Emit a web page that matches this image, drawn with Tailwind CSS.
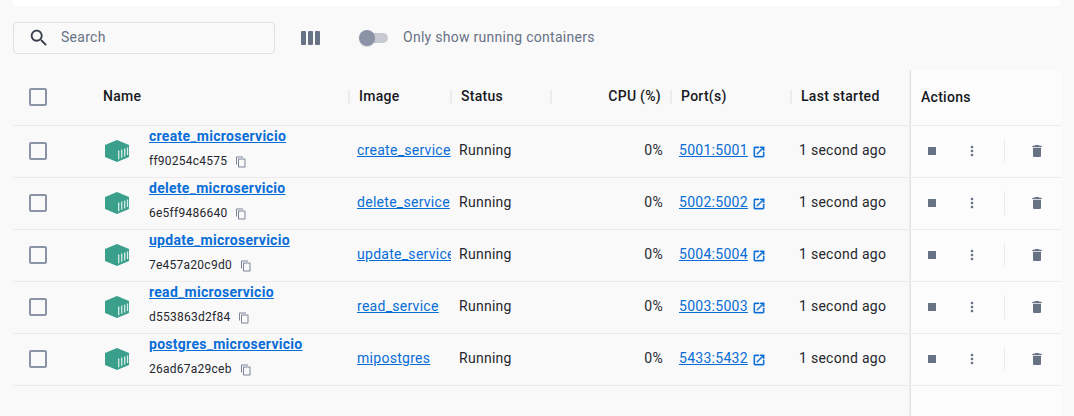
<!DOCTYPE html>
<html lang="en">
<head>
<meta charset="utf-8">
<title>Containers</title>
<script src="https://cdn.jsdelivr.net/npm/@tailwindcss/browser@4"></script>
</head>
<body class="h-[416px] w-[1074px] overflow-hidden bg-[#f9f9f9] font-['Roboto',sans-serif] text-sm leading-5 tracking-[0.28px] text-[#17191e]">
<svg class="hidden">
  <symbol id="cube" viewBox="0 0 24 24"><path fill="#3a9f8b" d="M12 1l12 5v12l-12 5L0 18V6z"/><path stroke="#d8ece8" stroke-width="1.3" d="M13.7 11.6v8.6M16.7 10.5v8.2M19.7 9.4v8M22.5 8.4v7.7"/></symbol>
  <symbol id="copy" viewBox="0 0 24 24"><path d="M16 1H4c-1.1 0-2 .9-2 2v14h2V3h12V1zm3 4H8c-1.1 0-2 .9-2 2v14c0 1.100.9 2 2 2h11c1.100 0 2-.9 2-2V7c0-1.100-.9-2-2-2zm0 16H8V7h11v14z"/></symbol>
  <symbol id="open" viewBox="0 0 24 24"><path stroke-width=".6" d="M19 19H5V5h7V3H5c-1.110 0-2 .9-2 2v14c0 1.100.89 2 2 2h14c1.100 0 2-.9 2-2v-7h-2v7zM14 3v2h3.590l-9.830 9.830 1.410 1.410L19 6.410V10h2V3h-7z"/></symbol>
  <symbol id="more" viewBox="0 0 24 24"><path d="M12 8c1.100 0 2-.9 2-2s-.9-2-2-2-2 .9-2 2 .9 2 2 2zm0 2c-1.100 0-2 .9-2 2s.9 2 2 2 2-.9 2-2-.9-2-2-2zm0 6c-1.100 0-2 .9-2 2s.9 2 2 2 2-.9 2-2-.9-2-2-2z"/></symbol>
  <symbol id="trash" viewBox="0 0 24 24"><path d="M6 19c0 1.100.9 2 2 2h8c1.100 0 2-.9 2-2V7H6v12zM19 4h-3.500l-1-1h-5l-1 1H5v2h14V4z"/></symbol>
</svg>
<div class="ml-[13px] flex h-full w-[1048px] flex-col">
  <div class="h-1.5 shrink-0 rounded-b bg-white"></div>
  <div class="mt-4 flex h-8 shrink-0 items-center text-[#677285]">
    <div class="flex h-8 w-[262px] items-center rounded border border-[#dfe0e3] pl-[14px]">
      <svg class="size-[22px] fill-[#393f4a]" viewBox="0 0 24 24"><path d="M15.500 14h-.79l-.28-.27C15.410 12.590 16 11.110 16 9.500 16 5.910 13.090 3 9.500 3S3 5.910 3 9.500 5.910 16 9.500 16c1.610 0 3.090-.59 4.230-1.570l.27.28v.79l5 4.990L20.490 19l-4.990-5zm-6 0C7.010 14 5 11.990 5 9.500S7.010 5 9.500 5 14 7.010 14 9.500 11.990 14 9.500 14z"/></svg>
      <span class="mb-0.5 ml-[11px]">Search</span>
    </div>
    <div class="ml-[26px] flex gap-[2px]">
      <i class="h-[14px] w-[5px] rounded-[1px] bg-[#677285]"></i><i class="h-[14px] w-[5px] rounded-[1px] bg-[#677285]"></i><i class="h-[14px] w-[5px] rounded-[1px] bg-[#677285]"></i>
    </div>
    <div class="ml-[39px] flex h-4 w-[29px] items-center">
      <i class="z-10 size-4 rounded-full bg-[#8b93a6] shadow-[0_1px_1px_#0002]"></i>
      <i class="-ml-3 h-[10px] w-[25px] rounded-full bg-[#c6c9d2]"></i>
    </div>
    <span class="mb-0.5 ml-[15px]">Only show running containers</span>
  </div>
  <div id="table" class="mt-4 flex min-h-0 grow flex-col"></div>
</div>
<script>
const rows = [
  ['create_microservicio', 'ff90254c4575', 'create_service', '5001:5001'],
  ['delete_microservicio', '6e5ff9486640', 'delete_service', '5002:5002'],
  ['update_microservicio', '7e457a20c9d0', 'update_service', '5004:5004'],
  ['read_microservicio', 'd553863d2f84', 'read_service', '5003:5003'],
  ['postgres_microservicio', '26ad67a29ceb', 'mipostgres', '5433:5432'],
];
const grid = 'grid shrink-0 grid-cols-[80px_256px_102px_100px_120px_120px_120px_150px] grid-rows-[100%] border-b border-[#ebebed]';
const box = '<i class="mb-px ml-4 block size-[18px] rounded-[2px] border-2 border-[#8b93a6]"></i>';
const sep = 'before:-ml-px before:mr-[9px] before:mt-px before:h-[14px] before:w-[2px] before:bg-[#ececee]';
const header = `<div class="${grid} h-14 items-center font-medium">
  <div>${box}</div>
  <div class="pb-[3px] pl-[10px]">Name</div>
  <div class="flex items-center pb-[3px] ${sep}">Image</div>
  <div class="flex items-center pb-[3px] ${sep}">Status</div>
  <div class="flex items-center pb-[3px] ${sep}"><span class="ml-auto pr-[10px]">CPU (%)</span></div>
  <div class="flex items-center pb-[3px] ${sep}">Port(s)</div>
  <div class="flex items-center pb-[3px] ${sep}">Last started</div>
  <div class="flex h-full items-center rounded-tr bg-[#fcfcfc] pb-px pl-[10px] shadow-[-1px_0_2px_#0002] [clip-path:inset(0_0_0_-4px)]">Actions</div>
</div>`;
const body = rows.map(([name, id, image, port]) => `<div class="${grid} h-[52px] items-center text-[#25272d]">
  <div>${box}</div>
  <div class="flex items-center pb-px pl-3">
    <svg class="mr-5 size-6"><use href="#cube"/></svg>
    <div class="-mt-[5px] flex flex-col">
      <a class="font-bold leading-5 text-[#086dd7] underline">${name}</a>
      <div class="mt-[5px] flex items-center text-xs leading-5 tracking-[0.25px]">${id}<svg class="ml-2 mt-px size-3 fill-[#7c8599]"><use href="#copy"/></svg></div>
    </div>
  </div>
  <a class="mb-[3px] ml-2 overflow-hidden whitespace-nowrap text-[#086dd7] underline">${image}</a>
  <div class="pb-[3px] pl-2">Running</div>
  <div class="pb-[3px] pr-2 text-right">0%</div>
  <div class="flex items-center pb-[3px] pl-2 text-[#086dd7]"><span class="underline">${port}</span><svg class="ml-1 mt-[3px] size-[14px] fill-[#086dd7] stroke-[#086dd7]"><use href="#open"/></svg></div>
  <div class="pb-[3px] pl-2">1 second ago</div>
  <div class="flex h-full items-center bg-[#fcfcfc] pb-px shadow-[-1px_0_2px_#0002] [clip-path:inset(0_0_0_-4px)]">
    <i class="ml-[17px] size-2 bg-[#677285]"></i>
    <svg class="ml-7 size-4 fill-[#677285]"><use href="#more"/></svg>
    <i class="ml-6 h-6 w-px bg-[#ececee]"></i>
    <svg class="ml-6 size-4 fill-[#677285]"><use href="#trash"/></svg>
  </div>
</div>`).join('');
const rest = `<div class="flex min-h-0 grow justify-end"><div class="w-[150px] bg-[#fcfcfc] shadow-[-1px_0_2px_#0002] [clip-path:inset(0_0_0_-4px)]"></div></div>`;
document.getElementById('table').innerHTML = header + body + rest;
</script>
</body>
</html>
